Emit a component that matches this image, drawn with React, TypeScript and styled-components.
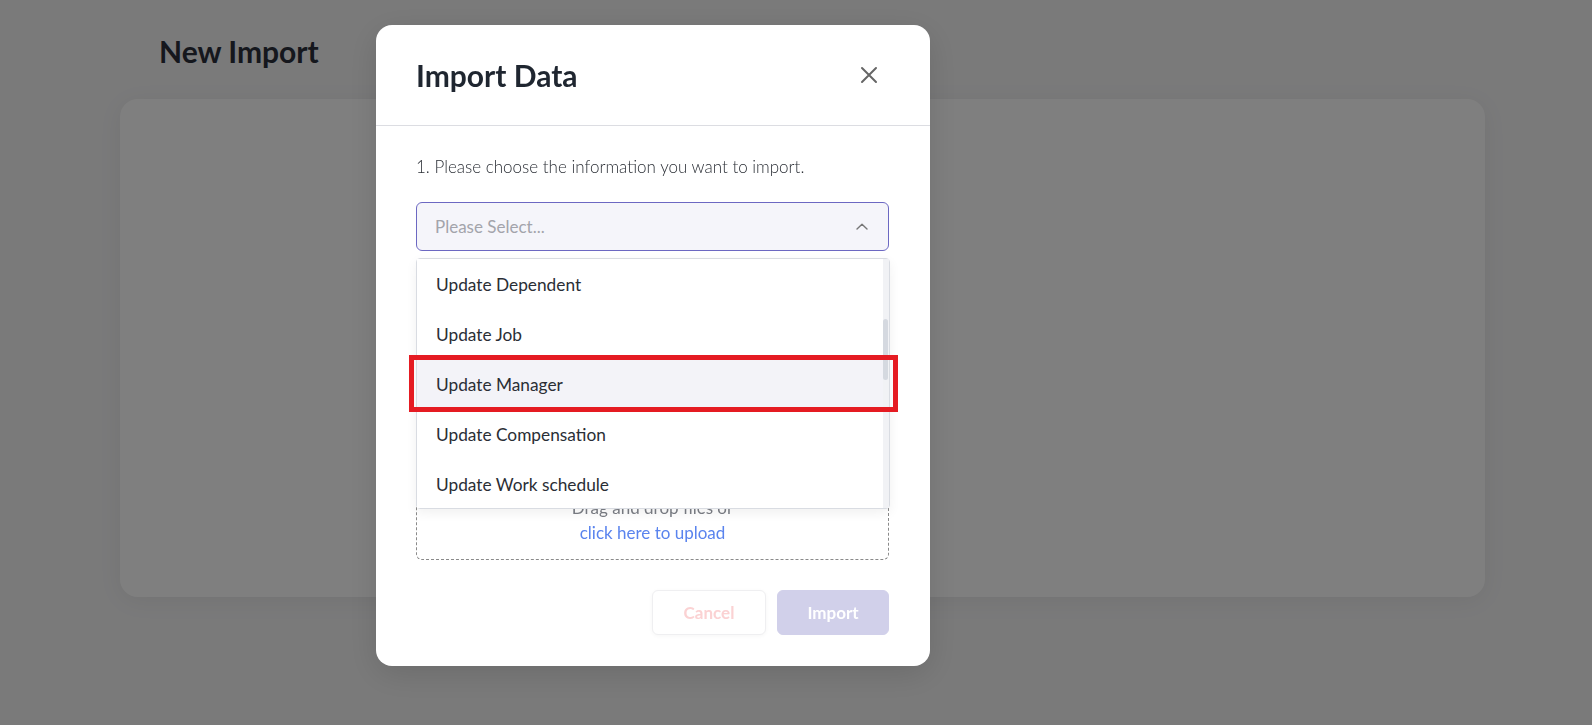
import React, { useLayoutEffect, useRef } from "react"
import styled, { createGlobalStyle } from "styled-components"

const GlobalStyle = createGlobalStyle`
  html, body {
    margin: 0;
    padding: 0;
    background: #f4f4f5;
    font-family: Lato, "Noto Sans", "Liberation Sans", sans-serif;
  }
  * {
    box-sizing: border-box;
  }
`

const Page = styled.div`
  width: 1592px;
  height: 725px;
  padding: 0 107px 0 120px;
  overflow: hidden;
`

const PageTitle = styled.h1`
  margin: 0;
  padding: 31px 0 0 39px;
  height: 99px;
  font-size: 30px;
  line-height: 40px;
  font-weight: 700;
  color: #2a2f3a;
`

const Card = styled.div`
  height: 498px;
  background: #fff;
  border-radius: 18px;
  box-shadow: 0 4px 24px rgba(0, 0, 0, 0.06);
`

const Overlay = styled.div`
  position: fixed;
  inset: 0;
  background: rgba(0, 0, 0, 0.5);
  padding: 25px 0 0 376px;
`

const Modal = styled.div`
  width: 554px;
  height: 641px;
  background: #fff;
  border-radius: 16px;
  display: flex;
  flex-direction: column;
  box-shadow: 0 8px 32px rgba(0, 0, 0, 0.12);
`

const Header = styled.div`
  height: 101px;
  flex: none;
  display: flex;
  align-items: center;
  justify-content: space-between;
  padding: 0 45px 0 40px;
  border-bottom: 1px solid #dcdde2;
`

const Title = styled.h2`
  margin: 0;
  font-size: 30px;
  font-weight: 700;
  color: #1f2630;
`

const CloseButton = styled.button`
  width: 32px;
  height: 32px;
  border: 0;
  padding: 0;
  background: transparent;
  display: flex;
  align-items: center;
  justify-content: center;
  cursor: pointer;
`

const Body = styled.div`
  flex: 1;
  display: flex;
  flex-direction: column;
  padding: 30px 41px 31px 40px;
`

const StepLabel = styled.p`
  margin: 0 0 24px;
  font-size: 17px;
  line-height: 22px;
  font-weight: 300;
  color: #2b2f36;
`

const SelectWrap = styled.div`
  position: relative;
  margin-bottom: 24px;
`

const SelectBox = styled.div`
  height: 49px;
  border: 1px solid #6c68c2;
  border-radius: 6px;
  background: #f5f5fa;
  display: flex;
  align-items: center;
  justify-content: space-between;
  padding: 0 20px 0 18px;
  font-size: 17px;
  color: #a3a4ab;
`

const Dropdown = styled.div`
  position: absolute;
  top: 56px;
  left: 0;
  right: -1px;
  z-index: 5;
  height: 251px;
  display: flex;
  background: #fff;
  border: 1px solid #d9dce2;
  border-radius: 4px;
  box-shadow: 0 4px 12px rgba(0, 0, 0, 0.06);
`

const OptionList = styled.ul`
  flex: 1;
  list-style: none;
  margin: 0;
  padding: 0;
  overflow-y: scroll;
  scrollbar-width: none;

  &::-webkit-scrollbar {
    display: none;
  }
`

const ScrollTrack = styled.div`
  width: 6px;
  flex: none;
  background: #f1f2f5;
  padding-top: 60px;
`

const ScrollThumb = styled.div`
  height: 61px;
  width: 5px;
  border-radius: 3px;
  background: #d5d9e0;
`

const Option = styled.li<{ $active?: boolean }>`
  height: 50px;
  display: flex;
  align-items: center;
  padding-left: 19px;
  font-size: 17.3px;
  color: #2a2e35;
  background: ${(p) => (p.$active ? "#f3f3f8" : "#fff")};
`

const Highlight = styled.div`
  position: absolute;
  top: 96px;
  left: -8px;
  width: 489px;
  height: 57px;
  border: 5px solid #e51b22;
  pointer-events: none;
`

const SecondLabel = styled(StepLabel)`
  margin-bottom: 16px;
`

const DropZone = styled.div`
  flex: 1;
  border: 1px dashed #8a8a8a;
  border-radius: 6px;
  display: flex;
  flex-direction: column;
  align-items: center;
  justify-content: flex-end;
  padding-bottom: 14px;
  margin-bottom: 30px;
  font-size: 17px;
  line-height: 25px;
  color: #7b7e85;
`

const UploadLink = styled.span`
  color: #5a84ee;
`

const Footer = styled.div`
  display: flex;
  justify-content: flex-end;
  gap: 11px;
`

const Button = styled.button<{ $primary?: boolean }>`
  height: 45px;
  width: ${(p) => (p.$primary ? "112px" : "114px")};
  border-radius: 6px;
  font-family: inherit;
  font-size: 17px;
  font-weight: 700;
  border: 1px solid ${(p) => (p.$primary ? "#d1d0ea" : "#efeff1")};
  background: ${(p) => (p.$primary ? "#d1d0ea" : "#fff")};
  color: ${(p) => (p.$primary ? "#fff" : "#fbd2d3")};
  box-shadow: ${(p) => (p.$primary ? "none" : "0 1px 4px rgba(0,0,0,0.04)")};
`

const options = [
  "New Hire",
  "Update Personal Info",
  "Update Contact",
  "Update Address",
  "Update Emergency Contact",
  "Update Dependent",
  "Update Job",
  "Update Manager",
  "Update Compensation",
  "Update Work schedule",
  "Update Bank Account",
  "Update Tax Info",
  "Update Education",
  "Update Work Experience",
  "Update Certification",
  "Update Skills",
  "Update Leave Balance",
  "Update Benefits",
  "Update Custom Fields",
  "Termination",
  "Rehire",
]

const CloseIcon = () => (
  <svg width="18" height="18" viewBox="0 0 18 18" fill="none">
    <path d="M2 2L16 16M16 2L2 16" stroke="#666" strokeWidth="2" strokeLinecap="round" />
  </svg>
)

const ChevronUp = () => (
  <svg width="12" height="7" viewBox="0 0 12 7" fill="none">
    <path d="M1 6L6 1.2L11 6" stroke="#777" strokeWidth="1.4" strokeLinecap="round" strokeLinejoin="round" />
  </svg>
)

const App: React.FC = () => {
  const listRef = useRef<HTMLUListElement>(null)

  useLayoutEffect(() => {
    if (listRef.current) listRef.current.scrollTop = 250
  }, [])

  return (
    <>
      <GlobalStyle />
      <Page>
        <PageTitle>New Import</PageTitle>
        <Card />
      </Page>
      <Overlay>
        <Modal>
          <Header>
            <Title>Import Data</Title>
            <CloseButton aria-label="close">
              <CloseIcon />
            </CloseButton>
          </Header>
          <Body>
            <StepLabel>1. Please choose the information you want to import.</StepLabel>
            <SelectWrap>
              <SelectBox>
                <span>Please Select...</span>
                <ChevronUp />
              </SelectBox>
              <Dropdown>
                <OptionList ref={listRef}>
                  {options.map((o) => (
                    <Option key={o} $active={o === "Update Manager"}>
                      {o}
                    </Option>
                  ))}
                </OptionList>
                <ScrollTrack>
                  <ScrollThumb />
                </ScrollTrack>
                <Highlight />
              </Dropdown>
            </SelectWrap>
            <SecondLabel>2. Please upload the file.</SecondLabel>
            <DropZone>
              <span>Drag and drop files or</span>
              <UploadLink>click here to upload</UploadLink>
            </DropZone>
            <Footer>
              <Button>Cancel</Button>
              <Button $primary>Import</Button>
            </Footer>
          </Body>
        </Modal>
      </Overlay>
    </>
  )
}

export default App
